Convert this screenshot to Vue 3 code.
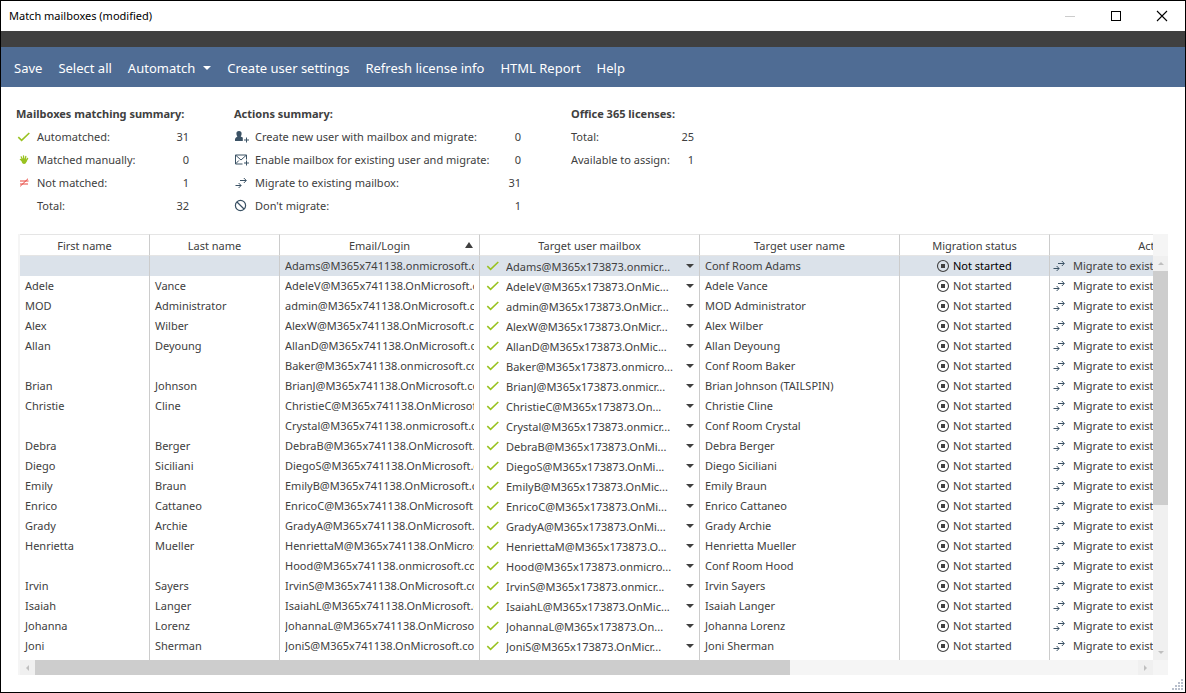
<script setup>
import { ref } from 'vue'

const menu = ['Save', 'Select all', 'Automatch', 'Create user settings', 'Refresh license info', 'HTML Report', 'Help']

const summaries = [
  {
    id: 'matching',
    title: 'Mailboxes matching summary:',
    items: [
      { icon: 'check', label: 'Automatched:', value: 31 },
      { icon: 'hand', label: 'Matched manually:', value: 0 },
      { icon: 'notequal', label: 'Not matched:', value: 1 },
      { icon: 'none', label: 'Total:', value: 32 }
    ]
  },
  {
    id: 'actions',
    title: 'Actions summary:',
    items: [
      { icon: 'user', label: 'Create new user with mailbox and migrate:', value: 0 },
      { icon: 'mail', label: 'Enable mailbox for existing user and migrate:', value: 0 },
      { icon: 'migrate', label: 'Migrate to existing mailbox:', value: 31 },
      { icon: 'block', label: "Don't migrate:", value: 1 }
    ]
  },
  {
    id: 'licenses',
    title: 'Office 365 licenses:',
    items: [
      { label: 'Total:', value: 25 },
      { label: 'Available to assign:', value: 1 }
    ]
  }
]

const columns = [
  { name: 'First name', cls: 'w130' },
  { name: 'Last name', cls: 'w130' },
  { name: 'Email/Login', cls: 'w200', sorted: true },
  { name: 'Target user mailbox', cls: 'w220' },
  { name: 'Target user name', cls: 'w200' },
  { name: 'Migration status', cls: 'w150' },
  { name: 'Action', cls: 'w210' }
]

const rows = [
  { first: '', last: '', email: 'Adams@M365x741138.onmicrosoft.com', target: 'Adams@M365x173873.onmicr...', name: 'Conf Room Adams' },
  { first: 'Adele', last: 'Vance', email: 'AdeleV@M365x741138.OnMicrosoft.com', target: 'AdeleV@M365x173873.OnMic...', name: 'Adele Vance' },
  { first: 'MOD', last: 'Administrator', email: 'admin@M365x741138.OnMicrosoft.com', target: 'admin@M365x173873.OnMicr...', name: 'MOD Administrator' },
  { first: 'Alex', last: 'Wilber', email: 'AlexW@M365x741138.OnMicrosoft.com', target: 'AlexW@M365x173873.OnMicr...', name: 'Alex Wilber' },
  { first: 'Allan', last: 'Deyoung', email: 'AllanD@M365x741138.OnMicrosoft.com', target: 'AllanD@M365x173873.OnMic...', name: 'Allan Deyoung' },
  { first: '', last: '', email: 'Baker@M365x741138.onmicrosoft.com', target: 'Baker@M365x173873.onmicro...', name: 'Conf Room Baker' },
  { first: 'Brian', last: 'Johnson', email: 'BrianJ@M365x741138.OnMicrosoft.com', target: 'BrianJ@M365x173873.onmicr...', name: 'Brian Johnson (TAILSPIN)' },
  { first: 'Christie', last: 'Cline', email: 'ChristieC@M365x741138.OnMicrosoft.com', target: 'ChristieC@M365x173873.On...', name: 'Christie Cline' },
  { first: '', last: '', email: 'Crystal@M365x741138.onmicrosoft.com', target: 'Crystal@M365x173873.onmicr...', name: 'Conf Room Crystal' },
  { first: 'Debra', last: 'Berger', email: 'DebraB@M365x741138.OnMicrosoft.com', target: 'DebraB@M365x173873.OnMi...', name: 'Debra Berger' },
  { first: 'Diego', last: 'Siciliani', email: 'DiegoS@M365x741138.OnMicrosoft.com', target: 'DiegoS@M365x173873.OnMi...', name: 'Diego Siciliani' },
  { first: 'Emily', last: 'Braun', email: 'EmilyB@M365x741138.OnMicrosoft.com', target: 'EmilyB@M365x173873.OnMic...', name: 'Emily Braun' },
  { first: 'Enrico', last: 'Cattaneo', email: 'EnricoC@M365x741138.OnMicrosoft.com', target: 'EnricoC@M365x173873.OnMi...', name: 'Enrico Cattaneo' },
  { first: 'Grady', last: 'Archie', email: 'GradyA@M365x741138.OnMicrosoft.com', target: 'GradyA@M365x173873.OnMi...', name: 'Grady Archie' },
  { first: 'Henrietta', last: 'Mueller', email: 'HenriettaM@M365x741138.OnMicrosoft.com', target: 'HenriettaM@M365x173873.O...', name: 'Henrietta Mueller' },
  { first: '', last: '', email: 'Hood@M365x741138.onmicrosoft.com', target: 'Hood@M365x173873.onmicro...', name: 'Conf Room Hood' },
  { first: 'Irvin', last: 'Sayers', email: 'IrvinS@M365x741138.OnMicrosoft.com', target: 'IrvinS@M365x173873.onmicr...', name: 'Irvin Sayers' },
  { first: 'Isaiah', last: 'Langer', email: 'IsaiahL@M365x741138.OnMicrosoft.com', target: 'IsaiahL@M365x173873.OnMic...', name: 'Isaiah Langer' },
  { first: 'Johanna', last: 'Lorenz', email: 'JohannaL@M365x741138.OnMicrosoft.com', target: 'JohannaL@M365x173873.On...', name: 'Johanna Lorenz' },
  { first: 'Joni', last: 'Sherman', email: 'JoniS@M365x741138.OnMicrosoft.com', target: 'JoniS@M365x173873.OnMicr...', name: 'Joni Sherman' }
]

const selected = ref(0)
</script>

<template>
  <div class="window">
    <!-- shared icon shapes -->
    <svg class="defs" width="0" height="0" aria-hidden="true">
      <symbol id="i-check" viewBox="0 0 14 14">
        <path d="M2.3 7.2 5.6 10.3 13.3 3" fill="none" stroke="#99c221" stroke-width="1.6" />
      </symbol>
      <symbol id="i-hand" viewBox="0 0 14 14">
        <path d="M4.4 6.4 6 7.6 M5.2 3.8 6.6 7 M7.5 2.8 7.8 7 M9.8 3.3 9.2 7 M11.6 5.4 10.2 8" fill="none" stroke="#99c221" stroke-width="1.3" stroke-linecap="round" />
        <path d="M4.8 6.2 6.6 5.6 10.2 5.6 11 7.6 9.8 10.2 Q8 11.8 6.2 10Z" fill="#99c221" />
      </symbol>
      <symbol id="i-notequal" viewBox="0 0 14 14">
        <path d="M4 5H12.5 M4 8H12 M4.2 10.3 12 2.7" fill="none" stroke="#e8473f" stroke-width="1" />
      </symbol>
      <symbol id="i-user" viewBox="0 0 14 14">
        <path d="M5 1a2.6 2.6 0 0 1 2.6 2.7C7.6 5 7 6 6.6 6.6L8.8 7.6V11H1V9Q1.2 7.8 3.4 6.6 2.4 5.4 2.4 3.7A2.6 2.6 0 0 1 5 1Z" fill="#3b5265" />
        <path d="M12.5 7.5V12.5 M10 10H15" stroke="#3b5265" stroke-width="1" fill="none" />
      </symbol>
      <symbol id="i-mail" viewBox="0 0 14 14">
        <path d="M8.5 11H1.5V2H12.5V6.5 M1.8 2.3 7 7 12.2 2.3 M1.8 10.7 4.8 7.5" stroke="#3b5265" stroke-width="1" fill="none" />
        <path d="M12.5 7.5V12.5 M10 10H15" stroke="#3b5265" stroke-width="1" fill="none" />
      </symbol>
      <symbol id="i-migrate" viewBox="0 0 14 14">
        <path d="M6 4.5H12 M9.8 2 12.3 4.5 9.8 7 M1.5 9.5H7 M4.6 7 7.1 9.5 4.6 12" stroke="#3b5265" stroke-width="1" fill="none" />
      </symbol>
      <symbol id="i-block" viewBox="0 0 14 14">
        <circle cx="6.5" cy="6.5" r="5.1" fill="none" stroke="#3b5265" stroke-width="1.2" />
        <path d="M3 3 10 10" stroke="#3b5265" stroke-width="1.2" />
      </symbol>
      <symbol id="i-stop" viewBox="0 0 14 14">
        <circle cx="7" cy="7" r="5.5" fill="none" stroke="#404040" stroke-width="1.1" />
        <rect x="5" y="5" width="4" height="4" fill="#404040" />
      </symbol>
    </svg>

    <header class="titlebar">
      <span class="title">Match mailboxes (modified)</span>
      <button class="winbtn" aria-label="Minimize" disabled>
        <svg width="10" height="10"><path d="M0 5.5H10" stroke="#ccc" /></svg>
      </button>
      <button class="winbtn" aria-label="Maximize">
        <svg width="10" height="10"><rect x=".5" y=".5" width="9" height="9" fill="none" stroke="#000" /></svg>
      </button>
      <button class="winbtn" aria-label="Close">
        <svg width="10" height="10"><path d="M0 0 10 10 M10 0 0 10" stroke="#000" stroke-width="1.1" /></svg>
      </button>
    </header>
    <div class="strip"></div>

    <nav class="toolbar">
      <button v-for="item in menu" :key="item">
        {{ item }}
        <svg v-if="item === 'Automatch'" width="8" height="4"><path d="M0 0H8L4 4Z" fill="#fff" /></svg>
      </button>
    </nav>

    <section class="summary">
      <div v-for="block in summaries" :key="block.id" class="block" :class="block.id">
        <h2>{{ block.title }}</h2>
        <ul>
          <li v-for="item in block.items" :key="item.label">
            <svg v-if="item.icon" class="icon" width="14" height="14"><use :href="'#i-' + item.icon" /></svg>
            <span class="label">{{ item.label }}</span>
            <span>{{ item.value }}</span>
          </li>
        </ul>
      </div>
    </section>

    <main class="grid">
      <div class="view">
        <table>
          <thead>
            <tr>
              <th v-for="col in columns" :key="col.name" :class="col.cls">
                {{ col.name }}
                <svg v-if="col.sorted" class="sort" width="8" height="6"><path d="M4 0 8 6H0Z" fill="#404040" /></svg>
              </th>
            </tr>
          </thead>
          <tbody>
            <tr v-for="(row, index) in rows" :key="index" :class="{ selected: index === selected }" @click="selected = index">
              <td>{{ row.first }}</td>
              <td>{{ row.last }}</td>
              <td><div class="clip">{{ row.email }}</div></td>
              <td>
                <div class="cell target">
                  <svg width="14" height="14"><use href="#i-check" /></svg>
                  <select :aria-label="'Target mailbox for ' + row.name">
                    <option>{{ row.target }}</option>
                  </select>
                  <svg class="arrow" width="8" height="4"><path d="M0 0H8L4 4Z" fill="#404040" /></svg>
                </div>
              </td>
              <td>{{ row.name }}</td>
              <td>
                <div class="cell status">
                  <svg width="14" height="14"><use href="#i-stop" /></svg>
                  <span>Not started</span>
                </div>
              </td>
              <td>
                <div class="cell action">
                  <svg width="14" height="14"><use href="#i-migrate" /></svg>
                  <span>Migrate to existing mailbox</span>
                </div>
              </td>
            </tr>
          </tbody>
        </table>
      </div>
      <div class="vscroll">
        <div class="corner"></div>
        <button aria-label="Scroll up"><svg width="6" height="3"><path d="M3 0 6 3H0Z" fill="#bfbfbf" /></svg></button>
        <div class="track"><div class="thumb"></div></div>
        <button aria-label="Scroll down"><svg width="6" height="3"><path d="M0 0H6L3 3Z" fill="#bfbfbf" /></svg></button>
      </div>
      <div class="hscroll">
        <button aria-label="Scroll left"><svg width="3" height="6"><path d="M3 0V6L0 3Z" fill="#bfbfbf" /></svg></button>
        <div class="track"><div class="thumb"></div></div>
        <button aria-label="Scroll right"><svg width="3" height="6"><path d="M0 0V6L3 3Z" fill="#bfbfbf" /></svg></button>
      </div>
    </main>

    <svg class="grip" width="11" height="11" fill="#b8bfcc">
      <path d="M9 0h2v2h-2z M6 3h2v2h-2z M9 3h2v2h-2z M3 6h2v2h-2z M6 6h2v2h-2z M9 6h2v2h-2z M0 9h2v2h-2z M3 9h2v2h-2z M6 9h2v2h-2z M9 9h2v2h-2z" />
    </svg>
  </div>
</template>

<style>
body {
  background: #fff;
}
</style>

<style scoped>
* {
  box-sizing: border-box;
}

.window {
  position: relative;
  min-height: 100vh;
  border: 1px solid #000;
  font-family: 'Noto Sans', 'Open Sans', sans-serif;
  font-size: 11px;
  color: #404040;
  white-space: nowrap;
  overflow: hidden;
}

svg {
  display: block;
  flex: none;
  overflow: visible;
}

symbol {
  overflow: visible;
}

.defs {
  position: absolute;
}

button {
  display: flex;
  align-items: center;
  justify-content: center;
  border: 0;
  padding: 0;
  background: none;
  font-family: inherit;
}

.titlebar {
  display: flex;
  align-items: center;
  height: 30px;
  padding-left: 8px;
  color: #000;
}

.title {
  flex: 1;
  padding-bottom: 2px;
}

.winbtn {
  width: 46px;
  height: 28px;
}

.strip {
  height: 16px;
  background: #404040;
}

.toolbar {
  display: flex;
  align-items: center;
  gap: 16px;
  height: 40px;
  padding: 2px 13px 0;
  background: #4f6c94;
}

.toolbar button {
  gap: 8px;
  color: #fff;
  font-size: 13px;
}

.summary {
  display: flex;
  padding: 16px 15px 17px;
}

.matching {
  width: 173px;
  margin-right: 45px;
}

.actions {
  width: 287px;
  margin-right: 50px;
}

.licenses {
  width: 123px;
}

h2 {
  margin: 0;
  font-size: 11px;
  font-weight: 700;
  line-height: 22px;
}

ul {
  margin: 0;
  padding: 0;
  list-style: none;
}

li {
  display: flex;
  align-items: center;
  height: 23px;
}

.icon {
  margin-right: 7px;
}

.label {
  flex: 1;
}

.grid {
  display: grid;
  grid-template-columns: minmax(0, 1fr) 15px;
  margin: 0 17px;
  border-left: 2px solid #f5f5f5;
}

.view {
  overflow: hidden;
}

table {
  width: 1240px;
  table-layout: fixed;
  border-collapse: separate;
  border-spacing: 0;
}

.w130 {
  width: 130px;
}

.w150 {
  width: 150px;
}

.w200 {
  width: 200px;
}

.w210 {
  width: 210px;
}

.w220 {
  width: 220px;
}

th {
  position: relative;
  height: 22px;
  padding: 0;
  border-top: 1px solid #e5e5e5;
  border-right: 1px solid #ccc;
  border-bottom: 1px solid #e5e5e5;
  font-weight: 400;
}

.sort {
  position: absolute;
  top: 7px;
  right: 6px;
}

td {
  height: 20px;
  padding: 0 5px;
  border-right: 1px solid #ccc;
  line-height: 20px;
}

tbody tr:last-child td {
  height: 24px;
  padding-bottom: 4px;
}

.selected td {
  background: #dbe2ea;
}

.selected .status {
  color: #000;
}

.clip {
  overflow: hidden;
}

.cell {
  display: flex;
  align-items: center;
  height: 20px;
}

.target svg:first-child {
  margin-right: 7px;
}

.target select {
  flex: 1;
  min-width: 0;
  height: 20px;
  margin: 0 6px 0 0;
  padding: 0;
  border: 0;
  appearance: none;
  background: none;
  font-family: inherit;
  font-size: 11px;
  color: inherit;
}

.status {
  gap: 3px;
  padding-left: 31px;
}

.action {
  gap: 7px;
  margin-left: -3px;
}

.vscroll {
  display: flex;
  flex-direction: column;
  background: #f0f0f0;
}

.vscroll .corner {
  height: 22px;
  background: #f5f5f5;
}

.vscroll button,
.hscroll button {
  width: 15px;
  height: 15px;
  background: #f0f0f0;
}

.track {
  flex: 1;
}

.vscroll .thumb {
  height: calc(100% * 20 / 32);
  background: #cdcdcd;
}

.hscroll {
  grid-column: 1 / 3;
  display: flex;
  padding-right: 15px;
  background: #f5f5f5;
}

.hscroll .thumb {
  width: calc(100% * 1133 / 1655);
  height: 15px;
  background: #cdcdcd;
}

.grip {
  position: absolute;
  right: 2px;
  bottom: 2px;
}
</style>
